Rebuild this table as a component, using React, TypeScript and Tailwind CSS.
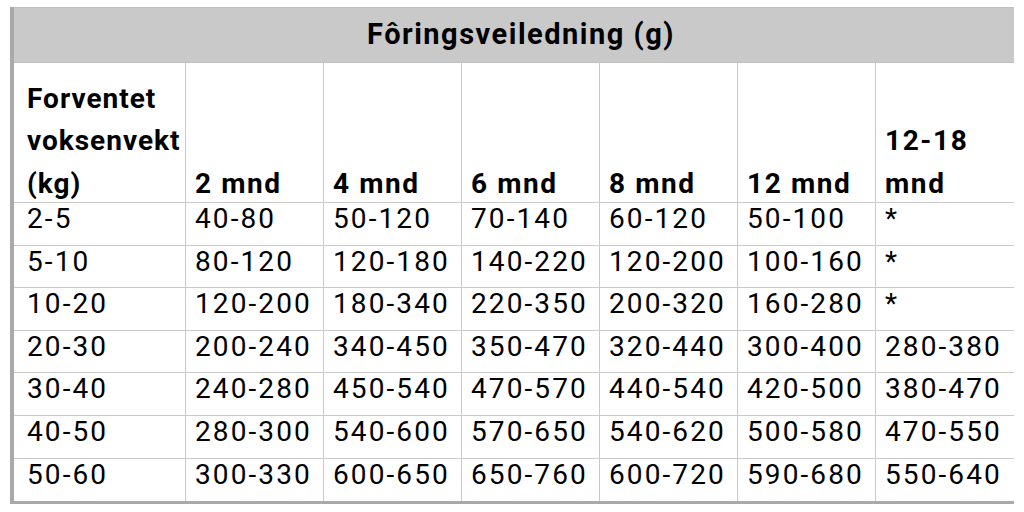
import React from "react";

const HEAD = ["2 mnd", "4 mnd", "6 mnd", "8 mnd", "12 mnd", "12-18 mnd"];

const ROWS: string[][] = [
  ["2-5", "40-80", "50-120", "70-140", "60-120", "50-100", "*"],
  ["5-10", "80-120", "120-180", "140-220", "120-200", "100-160", "*"],
  ["10-20", "120-200", "180-340", "220-350", "200-320", "160-280", "*"],
  ["20-30", "200-240", "340-450", "350-470", "320-440", "300-400", "280-380"],
  ["30-40", "240-280", "450-540", "470-570", "440-540", "420-500", "380-470"],
  ["40-50", "280-300", "540-600", "570-650", "540-620", "500-580", "470-550"],
  ["50-60", "300-330", "600-650", "650-760", "600-720", "590-680", "550-640"],
];

function HeadCell({ children, first, last }: { children: React.ReactNode; first?: boolean; last?: boolean }) {
  return (
    <div
      className={
        "flex h-[140px] flex-col justify-end border-b border-[#c9c9c9] text-[28px] font-bold leading-[42.5px] " +
        (first ? "pl-[13px] tracking-[1px] " : "pl-[9px] tracking-[1.6px] ") +
        (last ? "" : "border-r")
      }
    >
      <div className="-mb-[3px] flex flex-col">{children}</div>
    </div>
  );
}

export default function App() {
  return (
    <div className="h-[512px] w-[1024px] bg-white pt-[7px] text-black" style={{ fontFamily: "Roboto, 'Liberation Sans', sans-serif" }}>
      <div className="ml-[10px] w-[1004px] border-b-[3px] border-l-4 border-[#a9a9a9]">
        <div className="flex h-[56px] items-center justify-center border-b border-t border-[#c0c0c0] bg-[#c9c9c9] pl-[14px] text-[29px] font-bold tracking-[1.5px]">
          Fôringsveiledning (g)
        </div>
        <div className="grid grid-cols-[172px_repeat(6,138px)]">
          <HeadCell first>
            <span>Forventet</span>
            <span>voksenvekt</span>
            <span>(kg)</span>
          </HeadCell>
          {HEAD.map((h, i) =>
            h === "12-18 mnd" ? (
              <HeadCell key={h} last>
                <span>12-18</span>
                <span>mnd</span>
              </HeadCell>
            ) : (
              <HeadCell key={h} last={i === HEAD.length - 1}>
                <span>{h}</span>
              </HeadCell>
            )
          )}
          {ROWS.map((row, r) =>
            row.map((cell, c) => (
              <div
                key={r + "-" + c}
                className={
                  "h-[42.6px] border-[#c9c9c9] pt-[2px] text-[28px] leading-[28px] tracking-[2.1px] " +
                  (c === 0 ? "pl-[13px] " : "pl-[9px] ") +
                  (c === row.length - 1 ? "" : "border-r ") +
                  (r === ROWS.length - 1 ? "" : "border-b")
                }
              >
                {cell}
              </div>
            ))
          )}
        </div>
      </div>
    </div>
  );
}
